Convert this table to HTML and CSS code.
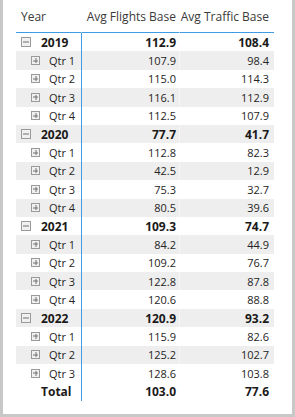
FILE: index.html
```html
<!DOCTYPE html>
<html>
<head>
<meta charset="utf-8">
<link rel="stylesheet" href="styles.css">
</head>
<body>
<div class="frame">
  <div class="matrix">
    <div class="row head">
      <div class="c1">Year</div>
      <div class="c2">Avg Flights Base</div>
      <div class="c3">Avg Traffic Base</div>
    </div>
    <div class="row year"><div class="c1"><span class="box minus"></span>2019</div><div class="c2">112.9</div><div class="c3">108.4</div></div>
    <div class="row alt"><div class="c1 q"><span class="box plus"></span>Qtr 1</div><div class="c2">107.9</div><div class="c3">98.4</div></div>
    <div class="row"><div class="c1 q"><span class="box plus"></span>Qtr 2</div><div class="c2">115.0</div><div class="c3">114.3</div></div>
    <div class="row alt"><div class="c1 q"><span class="box plus"></span>Qtr 3</div><div class="c2">116.1</div><div class="c3">112.9</div></div>
    <div class="row"><div class="c1 q"><span class="box plus"></span>Qtr 4</div><div class="c2">112.5</div><div class="c3">107.9</div></div>
    <div class="row year alt"><div class="c1"><span class="box minus"></span>2020</div><div class="c2">77.7</div><div class="c3">41.7</div></div>
    <div class="row"><div class="c1 q"><span class="box plus"></span>Qtr 1</div><div class="c2">112.8</div><div class="c3">82.3</div></div>
    <div class="row alt"><div class="c1 q"><span class="box plus"></span>Qtr 2</div><div class="c2">42.5</div><div class="c3">12.9</div></div>
    <div class="row"><div class="c1 q"><span class="box plus"></span>Qtr 3</div><div class="c2">75.3</div><div class="c3">32.7</div></div>
    <div class="row alt"><div class="c1 q"><span class="box plus"></span>Qtr 4</div><div class="c2">80.5</div><div class="c3">39.6</div></div>
    <div class="row year"><div class="c1"><span class="box minus"></span>2021</div><div class="c2">109.3</div><div class="c3">74.7</div></div>
    <div class="row alt"><div class="c1 q"><span class="box plus"></span>Qtr 1</div><div class="c2">84.2</div><div class="c3">44.9</div></div>
    <div class="row"><div class="c1 q"><span class="box plus"></span>Qtr 2</div><div class="c2">109.2</div><div class="c3">76.7</div></div>
    <div class="row alt"><div class="c1 q"><span class="box plus"></span>Qtr 3</div><div class="c2">122.8</div><div class="c3">87.8</div></div>
    <div class="row"><div class="c1 q"><span class="box plus"></span>Qtr 4</div><div class="c2">120.6</div><div class="c3">88.8</div></div>
    <div class="row year alt"><div class="c1"><span class="box minus"></span>2022</div><div class="c2">120.9</div><div class="c3">93.2</div></div>
    <div class="row"><div class="c1 q"><span class="box plus"></span>Qtr 1</div><div class="c2">115.9</div><div class="c3">82.6</div></div>
    <div class="row alt"><div class="c1 q"><span class="box plus"></span>Qtr 2</div><div class="c2">125.2</div><div class="c3">102.7</div></div>
    <div class="row"><div class="c1 q"><span class="box plus"></span>Qtr 3</div><div class="c2">128.6</div><div class="c3">103.8</div></div>
    <div class="row total"><div class="c1">Total</div><div class="c2">103.0</div><div class="c3">77.6</div></div>
  </div>
</div>
</body>
</html>
```
FILE: styles.css
```css
html, body {
  margin: 0;
  padding: 0;
  background: #ffffff;
}
.frame {
  box-sizing: border-box;
  width: 295px;
  height: 417px;
  border: 3px solid #c8c8c8;
  border-top: 0;
  background: #ffffff;
  padding-left: 13px;
  font-family: "Open Sans", "Liberation Sans", sans-serif;
  font-size: 11px;
  color: #252423;
}
.matrix {
  width: 258px;
}
.row {
  display: flex;
  height: 18.4px;
  align-items: stretch;
}
.row > div {
  display: flex;
  align-items: center;
  box-sizing: border-box;
  white-space: nowrap;
}
.c1 {
  width: 66px;
  border-right: 1px solid #3e9be6;
  padding-left: 5px;
}
.c2 {
  width: 98px;
  justify-content: flex-end;
  padding-right: 3px;
  border-right: 1px solid transparent;
}
.c3 {
  width: 94px;
  justify-content: flex-end;
  padding-right: 5px;
}
.row.alt > div {
  background: #eeeeee;
}
.row.alt .c2 {
  border-right-color: #f6f6f6;
}
.row.head {
  height: 33px;
}
.row.head > div {
  border-bottom: 1px solid #3e9be6;
  border-right: 1px solid #ffffff;
  color: #3b3a39;
  font-size: 12px;
  padding-top: 1px;
}
.row.head .c3 {
  border-right: 0;
}
.row.head .c1 {
  border-right: 1px solid #ffffff;
}
.year > div, .total > div {
  font-weight: 700;
  color: #1b1a19;
  font-size: 12px;
}
.q {
  padding-left: 15px !important;
  color: #252423;
}
.box {
  display: inline-block;
  position: relative;
  box-sizing: border-box;
  width: 10px;
  height: 10px;
  border: 1px solid #9a9a9a;
  background: #f0f0f0;
  margin-right: 10px;
  flex: none;
}
.q .box {
  width: 9px;
  height: 9px;
  margin-right: 9px;
}
.box::before, .box::after {
  content: "";
  position: absolute;
  background: #707070;
}
.box::before {
  left: 1px;
  right: 1px;
  top: 50%;
  height: 1px;
  transform: translateY(-50%);
}
.plus::after {
  top: 1px;
  bottom: 1px;
  left: 50%;
  width: 1px;
  transform: translateX(-50%);
}
.total .c1 {
  padding-left: 25px;
}
```
